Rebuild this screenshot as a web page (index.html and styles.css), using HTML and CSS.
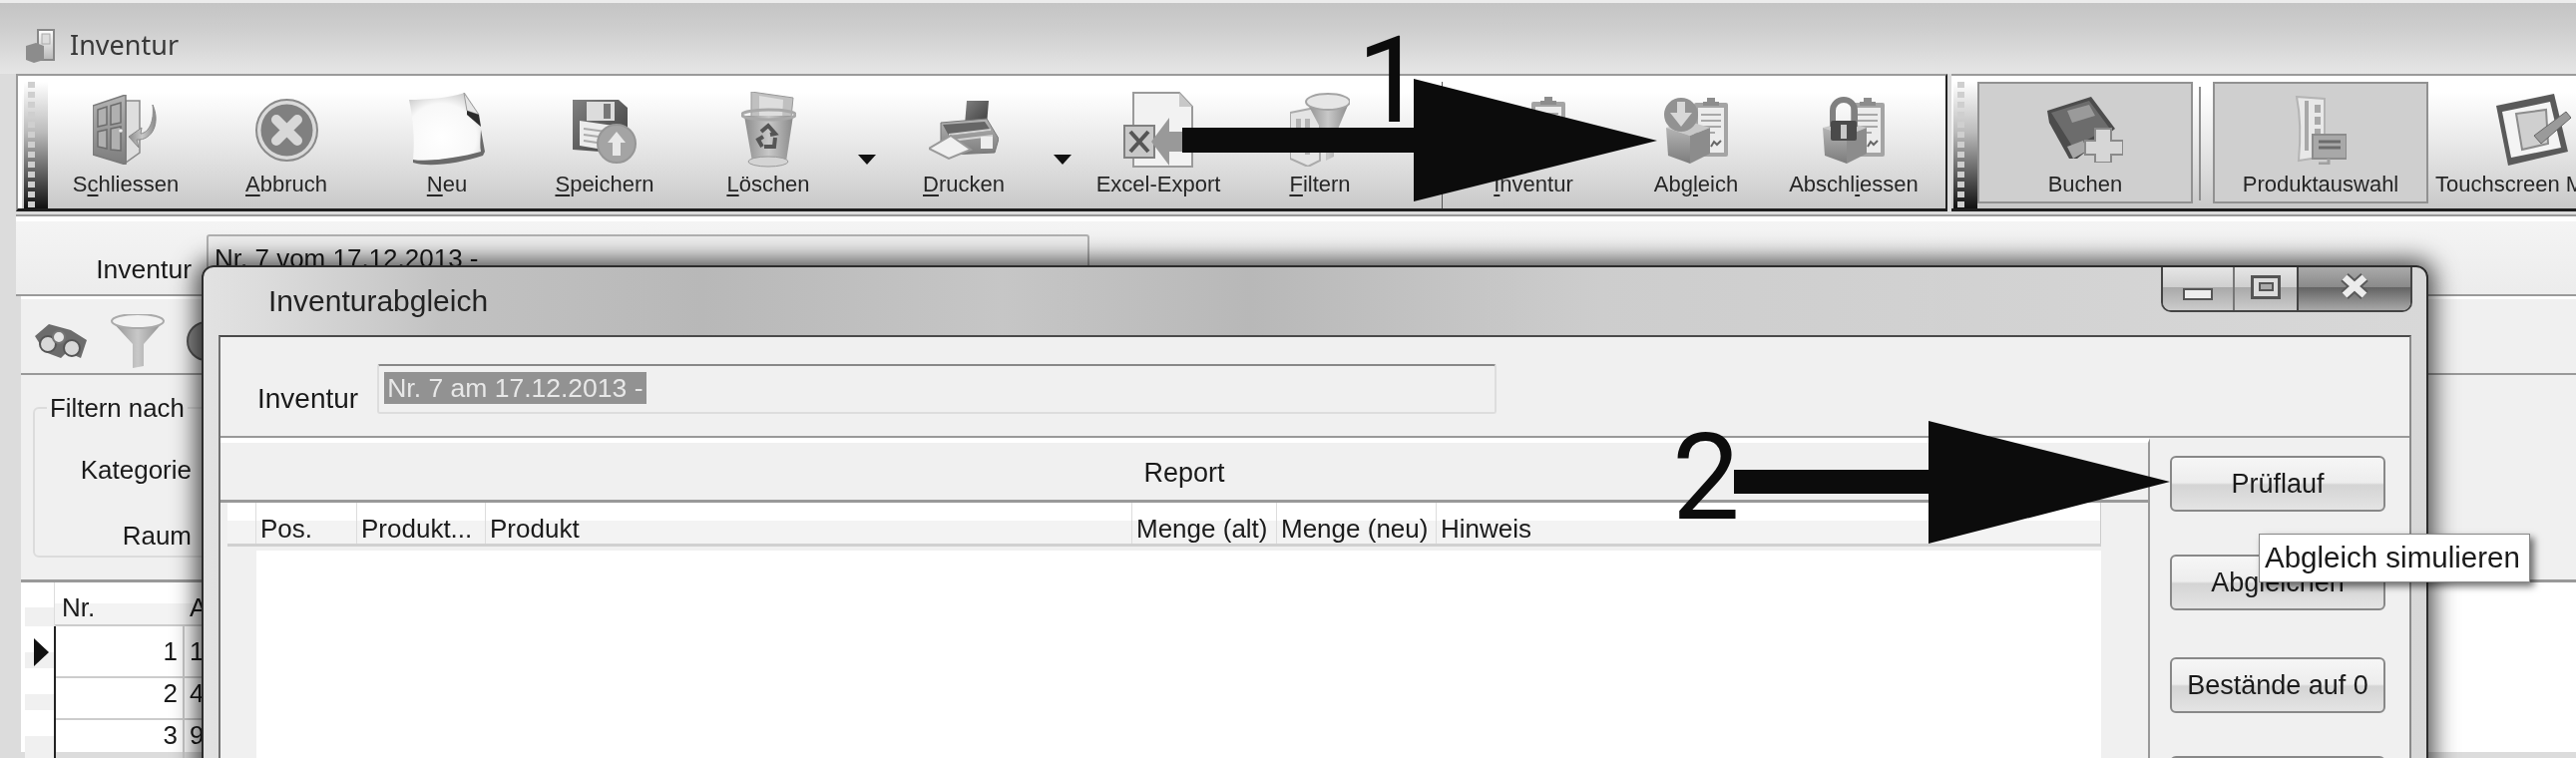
FILE: index.html
```html
<!DOCTYPE html>
<html lang="de">
<head>
<meta charset="utf-8">
<title>Inventur</title>
<link rel="stylesheet" href="styles.css">
</head>
<body>
<svg class="defs" width="0" height="0" aria-hidden="true">
  <defs>
    <linearGradient id="gL" x1="0" y1="0" x2="0" y2="1"><stop offset="0" stop-color="#fff"/><stop offset="1" stop-color="#b8b8b8"/></linearGradient>
    <linearGradient id="gM" x1="0" y1="0" x2="0" y2="1"><stop offset="0" stop-color="#b4b4b4"/><stop offset="1" stop-color="#7c7c7c"/></linearGradient>
    <linearGradient id="gD" x1="0" y1="0" x2="1" y2="1"><stop offset="0" stop-color="#808080"/><stop offset="1" stop-color="#3c3c3c"/></linearGradient>
    <linearGradient id="gH" x1="0" y1="0" x2="1" y2="0"><stop offset="0" stop-color="#8c8c8c"/><stop offset=".5" stop-color="#c8c8c8"/><stop offset="1" stop-color="#8a8a8a"/></linearGradient>
    <radialGradient id="gPage" cx=".45" cy=".65" r=".75"><stop offset="0" stop-color="#fff"/><stop offset=".65" stop-color="#f8f8f8"/><stop offset="1" stop-color="#c4c4c4"/></radialGradient>
    <symbol id="clip" viewBox="0 0 36 62">
      <rect x="1" y="6" width="34" height="54" rx="2" fill="#a4a4a4"/>
      <rect x="5" y="11" width="26" height="45" fill="#ececec"/>
      <path d="M10 9h16v-4h-4v-4h-8v4h-4z" fill="#8c8c8c"/>
      <path d="M8 18h20M8 24h20M8 30h20M8 36h14" stroke="#a8a8a8" stroke-width="2"/>
      <path d="M18 50l3-5 3 3 4-4" stroke="#666" stroke-width="2" fill="none"/>
    </symbol>
    <symbol id="box" viewBox="0 0 44 44">
      <path d="M0 8l24 -6 20 6-20 8z" fill="#c8c8c8"/>
      <path d="M0 8l24 8v28l-22-8z" fill="url(#gM)"/>
      <path d="M24 16l20-8v26l-20 10z" fill="#8c8c8c"/>
    </symbol>
  </defs>
</svg>

<div class="app">
  <header class="app-title">
    <svg class="title-icon" width="32" height="36" viewBox="0 0 32 36">
      <rect x="13" y="3" width="16" height="30" fill="url(#gL)" stroke="#888" stroke-width="2"/>
      <rect x="17" y="7" width="8" height="10" fill="#ddd" stroke="#aaa"/>
      <path d="M1 19l10-3 8 3v14l-10 3-8-3z" fill="#8c8c8c"/>
    </svg>
    <span class="app-title-text">Inventur</span>
  </header>

  <div class="toolbars">
    <div class="band band-main">
      <div class="grip"></div>
      <div class="tools-main">
        <div class="tool">
          <div class="tool-icon">
            <svg width="66" height="70" viewBox="0 0 66 70">
              <path d="M33 6h14v52l-14 10z" fill="#dedede" stroke="#8a8a8a" stroke-width="1.5"/>
              <path d="M0 11L33 0v70L0 60z" fill="url(#gM)" stroke="#7a7a7a" stroke-width="1.5"/>
              <path d="M5 15l9-3v18l-9 2zM18 11l10-3v20l-10 2zM5 37l9-2v19l-9-2zM18 34l10-2v24l-10-1z" fill="#b0b0b0" stroke="#6c6c6c" stroke-width="1.5"/>
              <circle cx="28" cy="36" r="1.8" fill="#eee"/>
              <path d="M60 10c8 18 0 36-16 35l2 8L36 42l13-9-1 6c8-1 14-12 12-29z" fill="url(#gH)" stroke="#888"/>
            </svg>
          </div>
          <span class="tool-label">S<u>c</u>hliessen</span>
        </div>
        <div class="tool">
          <div class="tool-icon">
            <svg width="63" height="63" viewBox="0 0 63 63">
              <circle cx="31.500" cy="31.500" r="30.500" fill="#dadada" stroke="#8a8a8a" stroke-width="2"/>
              <circle cx="31.500" cy="31.500" r="26" fill="#808080"/>
              <path d="M21 21l21 21M42 21L21 42" stroke="#d8d8d8" stroke-width="10" stroke-linecap="round"/>
            </svg>
          </div>
          <span class="tool-label"><u>A</u>bbruch</span>
        </div>
        <div class="tool">
          <div class="tool-icon">
            <svg width="77" height="76" viewBox="0 0 77 76">
              <path d="M4 71C20 76 50 72 74 64L76 60 72 38 66 60C44 66 22 70 4 68z" fill="#6a6a6a"/>
              <path d="M0 8C18 8 40 6 56 1L70 22C74 38 70 50 72 60 50 66 24 70 4 68 6 48 4 26 0 8z" fill="url(#gPage)"/>
              <path d="M55 1l3 18 12 4z" fill="#e6e6e6" stroke="#9c9c9c"/>
              <path d="M58 19l12 4 2 12-14-12z" fill="#2c2c2c"/>
            </svg>
          </div>
          <span class="tool-label"><u>N</u>eu</span>
        </div>
        <div class="tool">
          <div class="tool-icon">
            <svg width="64" height="68" viewBox="0 0 64 68">
              <path d="M0 4h46l9 8v46L0 54z" fill="url(#gD)"/>
              <rect x="14" y="6" width="28" height="19" fill="#dcdcdc"/>
              <rect x="31" y="8" width="7" height="15" fill="#777"/>
              <path d="M7 25l41 6v26L7 50z" fill="#ececec"/>
              <path d="M11 33l30 4M11 39l30 4M11 45l20 3" stroke="#aaa" stroke-width="2"/>
              <circle cx="44" cy="48" r="19" fill="#a4a4a4" stroke="#969696" stroke-width="2"/>
              <path d="M44 36L53 47H48V60H40V47H35z" fill="#e8e8e8"/>
            </svg>
          </div>
          <span class="tool-label"><u>S</u>peichern</span>
        </div>
        <div class="tool">
          <div class="tool-icon">
            <svg width="55" height="76" viewBox="0 0 55 76">
              <path d="M10 0l42 6-2 20H10z" fill="#c0c0c0" stroke="#9a9a9a"/>
              <path d="M18 4l24 4-1 18H18z" fill="#dedede"/>
              <path d="M3 24l8 46c8 6 26 6 34 0l7-46z" fill="url(#gH)"/>
              <ellipse cx="27.500" cy="23" rx="27" ry="5" fill="none" stroke="#a8a8a8" stroke-width="3"/>
              <ellipse cx="27" cy="70" rx="20" ry="5" fill="#d4d4d4" stroke="#999"/>
              <path d="M20 40l7-6 7 8-5 1M34 46l-1 9-10 0M21 55l-4-7 5-3" fill="none" stroke="#555" stroke-width="4"/>
            </svg>
          </div>
          <span class="tool-label"><u>L</u>öschen</span>
        </div>
        <div class="drop"><span class="drop-arrow"></span></div>
        <div class="tool">
          <div class="tool-icon">
            <svg width="70" height="62" viewBox="0 0 70 62">
              <path d="M38 2h22l-2 24H36z" fill="url(#gD)"/>
              <path d="M12 24l46-4 12 20-4 14-46 2-8-14z" fill="url(#gM)" stroke="#777"/>
              <path d="M14 26l42-3 6 9-42 5z" fill="#666"/>
              <path d="M20 36l42-5M22 42l42-5" stroke="#d4d4d4" stroke-width="2"/>
              <rect x="52" y="38" width="12" height="12" fill="#eee"/>
              <path d="M0 50l22-13 20 14-22 9z" fill="#f0f0f0" stroke="#999" stroke-width="2"/>
            </svg>
          </div>
          <span class="tool-label"><u>D</u>rucken</span>
        </div>
        <div class="drop"><span class="drop-arrow"></span></div>
        <div class="tool">
          <div class="tool-icon">
            <svg width="70" height="76" viewBox="0 0 70 76">
              <path d="M10 1h46l13 14v60H10z" fill="#f2f2f2" stroke="#9a9a9a" stroke-width="2"/>
              <path d="M56 1v14h13z" fill="#c8c8c8"/>
              <rect x="1" y="34" width="30" height="32" fill="#c8c8c8" stroke="#808080" stroke-width="2"/>
              <path d="M7 40l18 20M25 40L7 60" stroke="#555" stroke-width="4"/>
              <path d="M28 50L46 26v14h16v20H46v14z" fill="#999"/>
            </svg>
          </div>
          <span class="tool-label">Excel-Export</span>
        </div>
        <div class="tool">
          <div class="tool-icon">
            <svg width="60" height="74" viewBox="0 0 60 74">
              <path d="M0 20l30-6v54l-12 6-18-8z" fill="#e4e4e4" stroke="#aaa" stroke-width="2"/>
              <path d="M6 26h5v34H6zM15 26h5v36h-5z" fill="#b4b4b4"/>
              <path d="M16 8h44L44 46v18l-8 4V46z" fill="url(#gH)"/>
              <ellipse cx="38" cy="9" rx="22" ry="8" fill="#e6e6e6" stroke="#a4a4a4" stroke-width="2"/>
            </svg>
          </div>
          <span class="tool-label"><u>F</u>iltern</span>
        </div>
        <div class="tool-sep"></div>
        <div class="tool">
          <div class="tool-icon">
            <svg width="66" height="68" viewBox="0 0 66 68">
              <use href="#box" x="0" y="24" width="44" height="44"/>
              <use href="#clip" x="30" y="0" width="36" height="62"/>
            </svg>
          </div>
          <span class="tool-label"><u>I</u>nventur</span>
        </div>
        <div class="tool">
          <div class="tool-icon">
            <svg width="66" height="67" viewBox="0 0 66 67">
              <use href="#clip" x="30" y="0" width="36" height="62"/>
              <use href="#box" x="3" y="23" width="44" height="44"/>
              <circle cx="18" cy="18" r="17" fill="#929292"/>
              <path d="M14 5h8v11h7L18 30 7 16h7z" fill="#d8d8d8"/>
            </svg>
          </div>
          <span class="tool-label">Abg<u>l</u>eich</span>
        </div>
        <div class="tool">
          <div class="tool-icon">
            <svg width="63" height="67" viewBox="0 0 63 67">
              <use href="#clip" x="27" y="0" width="36" height="62"/>
              <use href="#box" x="0" y="23" width="44" height="44"/>
              <path d="M10 30V14a11 11 0 0 1 22 0v16" fill="none" stroke="#808080" stroke-width="6"/>
              <rect x="8" y="24" width="26" height="20" rx="2" fill="#4a4a4a"/>
              <rect x="18" y="28" width="6" height="14" fill="#c8c8c8"/>
            </svg>
          </div>
          <span class="tool-label">Abschl<u>i</u>essen</span>
        </div>
      </div>
    </div>
    <div class="band band-side">
      <div class="grip"></div>
      <div class="tools-side">
        <div class="tool tool-on">
          <div class="tool-icon">
            <svg width="76" height="66" viewBox="0 0 76 66">
              <path d="M0 14L44 0l24 32-38 30h-8L2 26z" fill="#4c4c4c"/>
              <path d="M4 16L42 4l20 27-36 20z" fill="#6c6c6c"/>
              <path d="M20 14l22-6 6 11-23 7z" fill="#9a9a9a"/>
              <path d="M20 50l6 12 14-8-4-10z" fill="#a8a8a8"/>
              <path d="M48 32h16v12h12v14H64v8H48V58H38V44h10z" fill="#d6d6d6" stroke="#8a8a8a" stroke-width="2"/>
            </svg>
          </div>
          <span class="tool-label">Buchen</span>
        </div>
        <div class="side-sep"></div>
        <div class="tool tool-on">
          <div class="tool-icon">
            <svg width="52" height="70" viewBox="0 0 52 70">
              <path d="M2 2l28 2v58L4 66C6 44 6 22 2 2z" fill="#e8e8e8" stroke="#b4b4b4" stroke-width="2"/>
              <path d="M10 6v50h4V6zM20 10h6v8h-6zM20 22h6v8h-6zM20 34h6v8h-6z" fill="#a8a8a8"/>
              <path d="M18 40h34v24H18z" fill="#a8a8a8" stroke="#8c8c8c" stroke-width="2"/>
              <path d="M24 47h22M24 53h22" stroke="#6c6c6c" stroke-width="3"/>
              <path d="M34 64v5h-10" stroke="#a0a0a0" stroke-width="3" fill="none"/>
            </svg>
          </div>
          <span class="tool-label">Produktauswahl</span>
        </div>
        <div class="tool tool-last">
          <div class="tool-icon">
            <svg width="75" height="73" viewBox="0 0 75 73">
              <path d="M0 12L58 0l14 58-60 14z" fill="#5a5a5a"/>
              <path d="M6 18L54 8l11 46-50 10z" fill="#f4f4f4"/>
              <path d="M20 20l30-4 2 34-26 6z" fill="#cfcfcf" stroke="#8c8c8c" stroke-width="2"/>
              <path d="M38 42l32-24 5 6-30 26z" fill="#9a9a9a" stroke="#666"/>
            </svg>
          </div>
          <span class="tool-label">Touchscreen Modus</span>
        </div>
      </div>
    </div>
  </div>

  <section class="form-row">
    <label class="form-label">Inventur</label>
    <div class="form-field">Nr. 7 vom 17.12.2013 -</div>
  </section>

  <section class="filter-bar">
    <svg width="56" height="38" viewBox="0 0 56 38">
      <path d="M2 14L16 2l22 6 16 10-6 18-14-6-6 6-16-6z" fill="#6c6c6c"/>
      <circle cx="15" cy="22" r="8" fill="#d8d8d8" stroke="#555" stroke-width="2"/>
      <circle cx="39" cy="26" r="8" fill="#d8d8d8" stroke="#555" stroke-width="2"/>
      <circle cx="26" cy="15" r="6" fill="#e6e6e6" stroke="#777" stroke-width="2"/>
    </svg>
    <svg width="54" height="54" viewBox="0 0 54 54">
      <path d="M0 6h54L33 30v22l-11 2V30z" fill="url(#gH)"/>
      <ellipse cx="27" cy="7" rx="26" ry="7" fill="#f2f2f2" stroke="#aaa" stroke-width="2"/>
    </svg>
    <svg width="40" height="42" viewBox="0 0 40 42">
      <circle cx="20" cy="21" r="19" fill="#8c8c8c" stroke="#555" stroke-width="2"/>
    </svg>
  </section>

  <section class="filter-section">
    <fieldset class="filter-group">
      <legend class="filter-legend">Filtern nach</legend>
      <div class="filter-line">Kategorie</div>
      <div class="filter-line filter-line-2">Raum</div>
    </fieldset>
  </section>

  <section class="back-grid">
    <div class="back-head">
      <div class="back-mark"></div>
      <div class="back-nr">Nr.</div>
      <div class="back-art">Art</div>
    </div>
    <div class="back-row">
      <div class="back-mark"><span class="row-arrow"></span></div>
      <div class="back-num">1</div>
      <div class="back-val">17.12.2013</div>
    </div>
    <div class="back-row">
      <div class="back-mark"></div>
      <div class="back-num">2</div>
      <div class="back-val">4</div>
    </div>
    <div class="back-row">
      <div class="back-mark"></div>
      <div class="back-num">3</div>
      <div class="back-val">9</div>
    </div>
  </section>

  <div class="dialog">
    <div class="dialog-title">
      <span class="dialog-title-text">Inventurabgleich</span>
      <div class="win-controls">
        <div class="win-btn">
          <span class="glyph-min"></span>
        </div>
        <div class="win-btn win-btn-mid">
          <span class="glyph-max"><span class="glyph-max-in"></span></span>
        </div>
        <div class="win-btn win-close">
          <svg width="32" height="28" viewBox="0 0 32 28">
            <path d="M6 5l20 18M26 5L6 23" stroke="#5a5a5a" stroke-width="11"/>
            <path d="M6 5l20 18M26 5L6 23" stroke="#ececec" stroke-width="7"/>
          </svg>
        </div>
      </div>
    </div>
    <div class="dialog-body">
      <div class="dlg-form">
        <label class="dlg-label">Inventur</label>
        <div class="dlg-field"><span class="dlg-selected">Nr. 7 am 17.12.2013 -</span></div>
      </div>
      <div class="dlg-main">
        <div class="report">
          <div class="report-head">Report</div>
          <div class="report-grid">
            <div class="rg-cell"></div>
            <div class="rg-cell">Pos.</div>
            <div class="rg-cell">Produkt...</div>
            <div class="rg-cell">Produkt</div>
            <div class="rg-cell">Menge (alt)</div>
            <div class="rg-cell">Menge (neu)</div>
            <div class="rg-cell rg-last">Hinweis</div>
          </div>
          <div class="report-body">
            <div class="rb-gutter"></div>
            <div class="rb-white"></div>
          </div>
        </div>
        <div class="dlg-actions">
          <button class="dlg-btn">Prüflauf</button>
          <button class="dlg-btn">Abgleichen</button>
          <button class="dlg-btn dlg-btn-wide">Bestände auf 0</button>
          <button class="dlg-btn"></button>
        </div>
      </div>
    </div>
  </div>

  <div class="tooltip">Abgleich simulieren</div>

  <svg class="annot" width="2582" height="760" viewBox="0 0 2582 760" aria-hidden="true">
    <path d="M1185 128H1417V79L1661 141 1417 202V153H1185z" fill="#0c0c0c"/>
    <path d="M1738 471H1933V422L2175 483 1933 545V495H1738z" fill="#0c0c0c"/>
  </svg>
  <span class="num num-1">1</span>
  <span class="num num-2">2</span>
</div>
</body>
</html>
```

FILE: styles.css
```css
* { box-sizing: border-box; }
html, body { margin: 0; padding: 0; }
body { background: #ddd; font-family: "Liberation Sans", Arial, sans-serif; color: #1a1a1a; }
.defs { position: absolute; }
u { text-underline-offset: 3px; text-decoration-thickness: 2px; }

.app { position: relative; width: 2582px; height: 760px; overflow: hidden; background: #dcdcdc; filter: blur(0.7px); }

.app-title { height: 74px; border-top: 3px solid #ececec; background: linear-gradient(#c4c4c4, #cfcfcf 40%, #e6e6e6); display: flex; align-items: center; padding: 12px 0 0 25px; gap: 13px; }
.app-title-text { font-family: "Noto Sans", sans-serif; font-size: 27px; color: #383838; }

.toolbars { margin-left: 16px; display: flex; gap: 4px; height: 148px; padding-bottom: 5px; border-bottom: 5px solid #fff; box-shadow: inset 0 -2px 0 #999; }
.band { height: 138px; border-top: 2px solid #9a9a9a; border-bottom: 3px solid #1e1e1e; padding-top: 6px; display: flex; background: linear-gradient(#fff 0, #fff 12%, #e6e6e6 55%, #c9c9c9 100%); }
.band-main { width: 1936px; border-left: 2px solid #9a9a9a; border-right: 2px solid #222; padding-left: 6px; box-shadow: inset 4px 0 0 #fff; }
.band-side { flex: 1; min-width: 0; padding-left: 2px; }
.grip { width: 24px; flex: none; background:
  repeating-linear-gradient(180deg, #cfcfcf 0 6px, transparent 6px 10px) 4px 0 / 7px 100% no-repeat,
  linear-gradient(#fff 0, #bbb 40%, #666 70%, #111 100%); }
.tools-main { display: grid; grid-template-columns: 156px 166px 156px 160px 168px 30px 164px 34px 158px 166px 40px 182px 144px 172px; }
.tools-side { flex: 1; min-width: 0; display: grid; grid-template-columns: 216px 20px 216px 1fr; }

.tool { height: 122px; border: 2px solid transparent; display: flex; flex-direction: column; align-items: center; min-width: 0; }
.tool-on { background: #cfcfcf; border-color: #919191; }
.tool-icon { height: 92px; display: flex; align-items: center; justify-content: center; flex: none; }
.tool-icon svg { filter: blur(0.5px); }
.tool-label { font-size: 22px; line-height: 26px; margin-top: -4px; white-space: nowrap; color: #262626; }
.tool-last { align-items: flex-start; padding-left: 7px; overflow: hidden; border-width: 2px 0; }
.tool-last .tool-icon { margin-left: 61px; }
.tool-sep { border-right: 1px solid #555; }
.side-sep { width: 2px; height: 114px; margin: 5px 0 0 6px; background: #8f8f8f; }
.drop { display: flex; justify-content: center; padding-top: 73px; }
.drop-arrow { width: 0; height: 0; border-left: 9px solid transparent; border-right: 9px solid transparent; border-top: 10px solid #111; }

.form-row { margin-left: 16px; height: 75px; border-bottom: 2px solid #999; background: linear-gradient(#f4f4f4, #ececec); display: flex; }
.form-label { width: 176px; margin-right: 15px; padding-top: 32px; font-size: 26.500px; line-height: 32px; text-align: right; }
.form-field { width: 885px; height: 60px; margin-top: 13px; padding: 7px 0 0 6px; border: 2px solid #b0b0b0; border-radius: 3px; background: #eee; font-size: 26px; line-height: 30px; }

.filter-bar { margin-left: 21px; height: 79px; border-top: 3px solid #fff; border-bottom: 2px solid #999; background: #f0f0f0; display: flex; align-items: center; padding: 10px 0 0 12px; gap: 22px; }

.filter-section { margin-left: 21px; height: 205px; padding: 18px 0 0 12px; background: #f0f0f0; }
.filter-group { margin: 0; padding: 0; width: 600px; height: 165px; border: 2px solid #dcdcdc; border-radius: 6px; }
.filter-legend { margin-left: 12px; padding: 0 3px; font-size: 25.800px; line-height: 30px; }
.filter-line { width: 157px; margin-top: 32px; font-size: 26px; line-height: 30px; text-align: right; }
.filter-line-2 { margin-top: 36px; }

.back-grid { margin-left: 21px; border-top: 3px solid #999; background: #fff; padding-left: 4px; font-size: 26px; }
.back-head { width: 1000px; height: 44px; display: grid; grid-template-columns: 29px 131px 1fr; border-bottom: 2px solid #ccc; background: linear-gradient(#fff 50%, #f3f3f3 50%); line-height: 50px; }
.back-nr { padding-left: 7px; border-left: 1px solid #ddd; }
.back-art { padding-left: 5px; }
.back-row { width: 1000px; height: 42px; display: grid; grid-template-columns: 29px 131px 1fr; }
.back-mark { display: flex; align-items: center; padding: 0 0 0 9px; background: linear-gradient(#fff 50%, #f0f0f0 50%); }
.back-num { border-left: 2px solid #222; border-right: 2px solid #ccc; border-bottom: 2px solid #ccc; padding-right: 5px; line-height: 50px; text-align: right; }
.back-val { border-bottom: 2px solid #ccc; padding-left: 5px; line-height: 50px; }
.row-arrow { width: 0; height: 0; border-top: 14px solid transparent; border-bottom: 14px solid transparent; border-left: 15px solid #111; }

.dialog { position: absolute; left: 202px; top: 266px; width: 2232px; height: 560px; border: 2px solid #2c2c2c; border-radius: 12px 12px 0 0; box-shadow: 0 0 24px 5px rgba(0, 0, 0, 0.72); background: linear-gradient(90deg, #e2e2e2 0, #dcdcdc 60px, #c2c2c2 240px, #b8b8b8 500px, #c6c6c6 800px, #b8b8b8 1050px, #cdcdcd 1400px, #d8d8d8 2232px); }
.dialog-title { height: 68px; display: flex; align-items: center; padding: 0 14px 0 65px; }
.dialog-title-text { font-size: 30px; color: #222; }
.win-controls { margin-left: auto; align-self: flex-start; width: 252px; height: 45px; display: grid; grid-template-columns: 70px 66px 1fr; border: 2px solid #444; border-top: 0; border-radius: 0 0 10px 10px; overflow: hidden; }
.win-btn { display: flex; align-items: center; justify-content: center; background: linear-gradient(#e6e6e6 0, #cfcfcf 46%, #a8a8a8 46%, #cbcbcb 100%); padding-top: 10px; }
.win-btn-mid { border-left: 2px solid #777; border-right: 2px solid #444; padding-top: 0; padding-bottom: 4px; }
.win-close { background: linear-gradient(#aaa 0, #8a8a8a 46%, #626262 46%, #a8a8a8 100%); padding: 0 0 6px; }
.glyph-min { width: 30px; height: 12px; border: 2px solid #555; background: #eee; }
.glyph-max { width: 30px; height: 24px; border: 3px solid #555; background: #dcdcdc; display: flex; align-items: center; justify-content: center; }
.glyph-max-in { width: 15px; height: 9px; border: 2px solid #555; background: #aaa; }

.dialog-body { margin: 0 15px; height: 490px; border-top: 2px solid #4a4a4a; border-left: 2px solid #707070; border-right: 2px solid #8a8a8a; background: #f0f0f0; }
.dlg-form { height: 101px; padding: 27px 0 0 37px; display: flex; gap: 19px; border-bottom: 2px solid #999; }
.dlg-label { font-size: 28px; line-height: 50px; padding-top: 10px; }
.dlg-field { width: 1122px; height: 50px; padding: 6px 5px; border: 2px solid #ddd; border-top-color: #888; border-radius: 3px; background: #f0f0f0; }
.dlg-selected { display: inline-block; height: 32px; padding: 0 3px; background: #929292; color: #e8e8e8; font-size: 26.500px; line-height: 32px; }
.dlg-main { display: flex; height: 389px; }
.report { width: 1934px; border-top: 5px solid #fff; border-right: 2px solid #999; }
.report-head { height: 60px; padding-top: 4px; border-bottom: 3px solid #999; display: flex; align-items: center; justify-content: center; font-size: 27px; }
.report-grid { width: 1878px; height: 44px; margin-left: 7px; display: grid; grid-template-columns: 29px 101px 129px 648px 145px 160px 1fr; border-bottom: 3px solid #d0d0d0; background: linear-gradient(#fff 45%, #f3f3f3 45%); font-size: 26px; line-height: 53px; }
.rg-cell { padding-left: 4px; border-right: 1px solid #ddd; white-space: nowrap; overflow: hidden; }
.rg-last { border-right: 1px solid #ccc; }
.report-body { width: 1878px; height: 300px; margin-left: 7px; display: flex; }
.rb-gutter { width: 29px; }
.rb-white { flex: 1; margin-top: 4px; background: #fff; }
.dlg-actions { flex: 1; padding: 18px 0 0 20px; display: flex; flex-direction: column; gap: 43px; }
.dlg-btn { flex: none; width: 216px; height: 56px; padding: 0; border: 2px solid #888; border-radius: 6px; background: linear-gradient(#f6f6f6 0, #ededed 48%, #d4d4d4 52%, #e4e4e4 100%); font-family: "Liberation Sans", Arial, sans-serif; font-size: 27px; color: #1a1a1a; }
.dlg-btn-wide { margin-top: 4px; }

.tooltip { position: absolute; left: 2264px; top: 535px; width: 272px; height: 49px; padding-left: 5px; border: 1px solid #888; background: #fff; box-shadow: 4px 4px 7px rgba(0, 0, 0, 0.55); font-size: 29.500px; line-height: 46px; white-space: nowrap; color: #1a1a1a; }

.annot { position: absolute; left: 0; top: 0; pointer-events: none; }
.num { position: absolute; font-family: Roboto, sans-serif; font-size: 121px; line-height: 121px; color: #0c0c0c; }
.num-1 { left: 1360px; top: 21px; }
.num-2 { left: 1676px; top: 419px; }
```
